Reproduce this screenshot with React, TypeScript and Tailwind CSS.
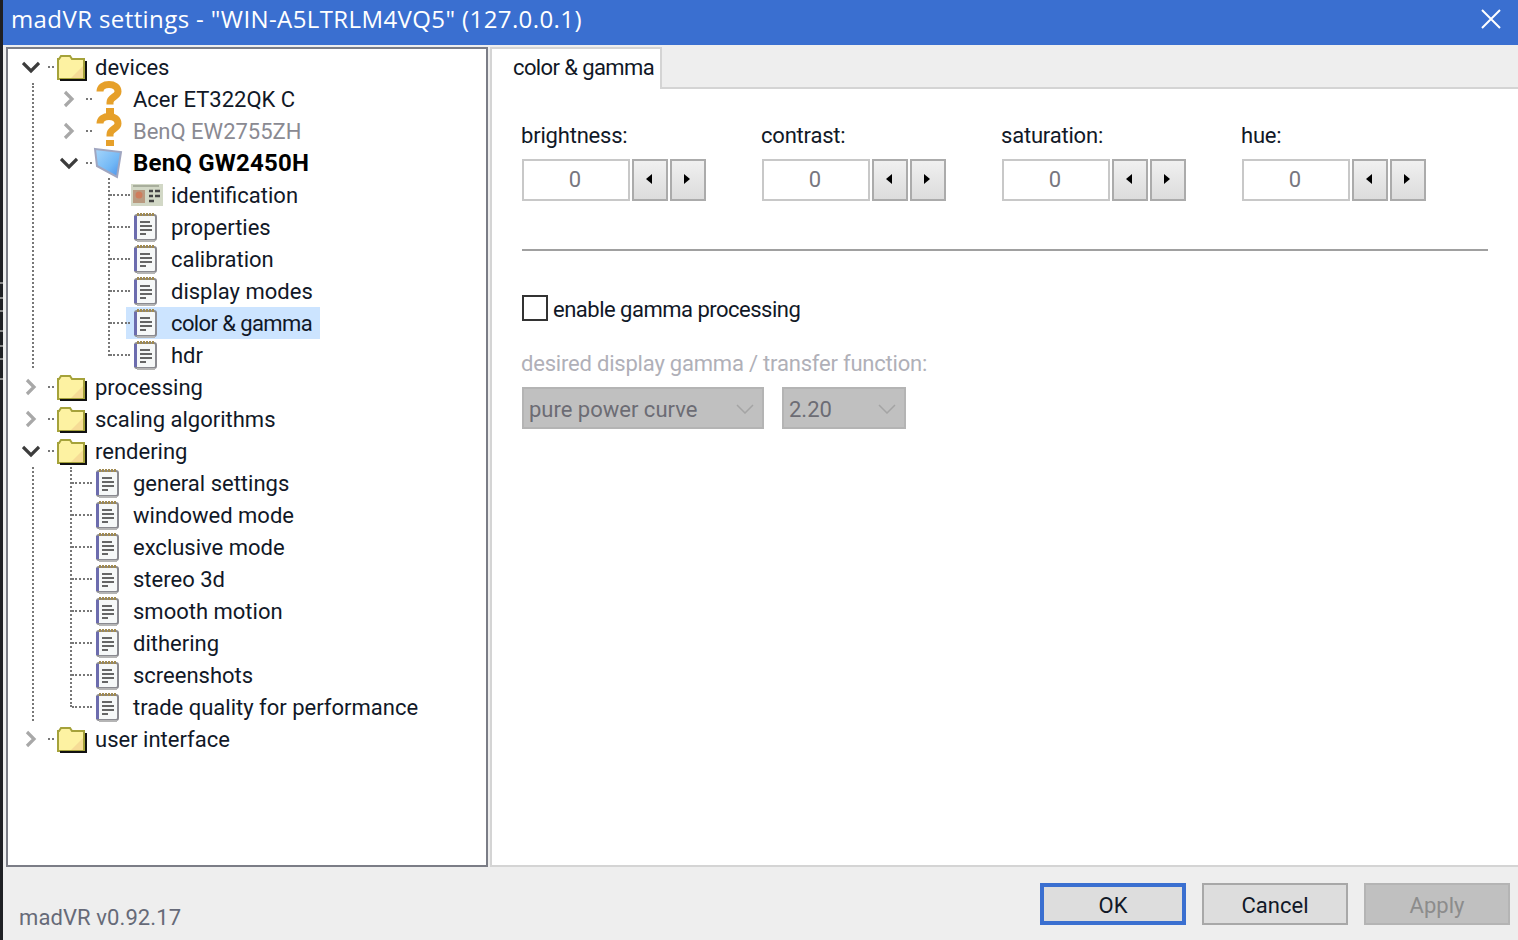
const font = "font-['Roboto',sans-serif]"

function Chevron({ open, dark }: { open?: boolean; dark?: boolean }) {
  return (
    <svg width="18" height="18" viewBox="0 0 18 18" fill="none" stroke={dark || open ? "#3c3c3c" : "#a8a8a8"} strokeWidth="3.2">
      {open ? <path d="M1 5l8 8 8-8" /> : <path d="M5 2l7 7-7 7" />}
    </svg>
  )
}

function Folder() {
  return (
    <svg width="30" height="28" viewBox="0 0 30 28" className="shrink-0 -ml-px">
      <path d="M1 6h1l2-3h9l2 3h12v20H1z" fill="#fdf2a2" stroke="#a5a23a" strokeWidth="2" />
      <path d="M14 25l12-12v12z" fill="#f6dc96" />
      <path d="M3 27h26V8" fill="none" stroke="#111" strokeWidth="2" />
    </svg>
  )
}

function Notepad() {
  return (
    <svg width="24" height="30" viewBox="0 0 24 30" className="shrink-0">
      <rect x="1" y="3" width="21" height="25" rx="2" fill="#f6f8f8" stroke="#8a8a90" strokeWidth="2" />
      <path d="M1.500 4v23" stroke="#6c6cae" strokeWidth="3" />
      <path d="M3 2.500h17" stroke="#a08a50" strokeWidth="3" strokeDasharray="2 1" />
      <path d="M6 10h10M6 14h12M6 18h12M6 22h6" stroke="#666" strokeWidth="2" />
      <path d="M3 29h18" stroke="#b5b5b5" strokeWidth="2" />
    </svg>
  )
}

function Question() {
  return (
    <svg width="26" height="36" viewBox="0 0 26 36" className="shrink-0 -my-1">
      <path d="M4 10.500c0-4.500 4-7 9-7s9 2.500 9 7c0 5.500-8 5-8 11v2" fill="none" stroke="#e6a02a" strokeWidth="7" />
      <path d="M10 27h8v6h-8z" fill="#e6a02a" />
    </svg>
  )
}

function Monitor() {
  return (
    <svg width="30" height="32" viewBox="0 0 30 32" className="shrink-0 -ml-[3px]">
      <defs>
        <linearGradient id="screen" x1="0" y1="0" x2="1" y2="1">
          <stop offset="0" stopColor="#a8d6fa" />
          <stop offset="0.6" stopColor="#72b8f6" />
          <stop offset="1" stopColor="#4a8fe8" />
        </linearGradient>
      </defs>
      <path d="M2 2l26 3-4 25L4 19z" fill="url(#screen)" stroke="#a0a6c0" strokeWidth="2" />
    </svg>
  )
}

function IdCard() {
  return (
    <svg width="32" height="22" viewBox="0 0 32 22" className="shrink-0 -ml-[3px]">
      <rect width="32" height="22" fill="#d2d8c6" />
      <rect x="2" y="6" width="12" height="13" fill="#b99a80" />
      <circle cx="8" cy="11" r="3.500" fill="#cf7d5c" />
      <path d="M18 7h4M24 7h5M18 12h4M24 12h5M18 17h5" stroke="#444" strokeWidth="2.500" />
      <path d="M2 2h26" stroke="#9aa08e" strokeWidth="1.500" />
    </svg>
  )
}

type RowProps = {
  level: number
  text: string
  icon: React.ReactNode
  expander?: "open" | "closed"
  grey?: boolean
  bold?: boolean
  selected?: boolean
}

function Row({ level, text, icon, expander, grey, bold, selected }: RowProps) {
  const starts = ["pl-[14px]", "pl-[52px]", "pl-[90px]"]
  return (
    <div className={`h-8 flex items-center ${starts[level]}`}>
      <div className="w-[18px] h-[18px] shrink-0">
        {expander && <Chevron open={expander === "open"} />}
      </div>
      <div className={`relative z-10 shrink-0 border-t-2 border-dotted border-[#777] ${expander ? "w-[6px] ml-[8px]" : "w-[20px] -ml-[6px]"}`} />
      <div className={`flex items-center shrink-0 h-8 ${selected ? "bg-[#cce4ff]" : ""} ${level === 2 ? "w-[194px] -ml-[4px] pl-[7px]" : "ml-[3px]"}`}>
        <div className="w-[38px] h-8 flex items-center shrink-0 pl-px">{icon}</div>
        <span className={`${font} whitespace-nowrap ${bold ? "text-[24px] tracking-[0.2px] font-bold text-black" : grey ? "text-[22px] text-[#8a8a92]" : selected ? "text-[22px] tracking-[-0.6px] text-[#111827]" : "text-[22px] text-[#111827]"}`}>
          {text}
        </span>
      </div>
    </div>
  )
}

function SpinField({ label }: { label: string }) {
  return (
    <div className="w-[240px]">
      <div className={`${font} text-[22px] tracking-[-0.2px] text-[#111827] h-[25px] leading-[25px] -ml-px`}>{label}</div>
      <div className="flex mt-[11px]">
        <div className={`${font} w-[108px] h-[42px] border-2 border-[#c8c8c8] bg-white flex items-center justify-center pb-[2px] pr-[2px] text-[22px] text-[#77777f]`}>0</div>
        <div className="flex gap-[2px] ml-[2px]">
          <SpinButton dir="left" />
          <SpinButton dir="right" />
        </div>
      </div>
    </div>
  )
}

function SpinButton({ dir }: { dir: "left" | "right" }) {
  return (
    <div className="w-[36px] h-[42px] border-2 border-[#ababab] bg-gradient-to-b from-[#f0f0f0] to-[#dcdcdc] flex items-center justify-center pb-[2px] pr-[2px]">
      <svg width="8" height="10" viewBox="0 0 8 10" fill="#000">
        {dir === "left" ? <path d="M7 0v10L1 5z" /> : <path d="M1 0v10l6-5z" />}
      </svg>
    </div>
  )
}

function DisabledSelect({ text, width }: { text: string; width: string }) {
  return (
    <div className={`${width} h-[42px] bg-[#c0c0c0] border-2 border-[#b4b4b4] flex items-center justify-between pl-[5px] pr-[8px] pt-[2px]`}>
      <span className={`${font} text-[22px] text-[#6c6c74]`}>{text}</span>
      <svg width="18" height="10" viewBox="0 0 18 10" fill="none" stroke="#a4a4a4" strokeWidth="1.500">
        <path d="M1 1l8 8 8-8" />
      </svg>
    </div>
  )
}

function Button({ text, kind }: { text: string; kind: "ok" | "normal" | "off" }) {
  const looks = {
    ok: "border-[4px] border-[#3a6fd0] bg-[#dddddd] text-[#111827]",
    normal: "border-2 border-[#a8a8a8] bg-[#dddddd] text-[#111827]",
    off: "border-2 border-[#b4b4b4] bg-[#c0c0c0] text-[#8c8c8c]",
  }
  return (
    <div className={`${font} ${looks[kind]} w-[146px] h-[42px] flex items-center justify-center pt-[3px] text-[22px]`}>{text}</div>
  )
}

function App() {
  return (
    <div className="w-[1518px] h-[940px] overflow-hidden flex bg-[#eeeeee]">
      <div className="w-[3px] h-full shrink-0 bg-[#1f2024] pt-[282px]">
        <div className="h-[2px] bg-[#8a8a8a]" />
        <div className="h-[2px] bg-[#8a8a8a] mt-[13px]" />
        <div className="h-[2px] bg-[#8a8a8a] mt-[11px]" />
        <div className="h-[2px] bg-[#8a8a8a] mt-[18px]" />
        <div className="h-[2px] bg-[#8a8a8a] mt-[13px]" />
        <div className="h-[2px] bg-[#8a8a8a] mt-[11px]" />
        <div className="h-[2px] bg-[#8a8a8a] mt-[18px]" />
      </div>
      <div className="flex-1 flex flex-col min-w-0">
        <div className="h-[45px] shrink-0 bg-[#3a6fd0] flex items-center justify-between pl-2 pr-[17px] pb-[8px]">
          <span className="font-['Open_Sans',sans-serif] text-[24px] text-white whitespace-nowrap tracking-[0.4px]">
            madVR settings - "WIN-A5LTRLM4VQ5" (127.0.0.1)
          </span>
          <svg width="20" height="20" viewBox="0 0 20 20" stroke="#fff" strokeWidth="2">
            <path d="M1 1l18 18M19 1L1 19" />
          </svg>
        </div>

        <div className="flex h-[822px] mt-[2px] shrink-0 pl-[3px]">
          <div className="w-[482px] h-[820px] border-2 border-[#7b7d86] bg-white pt-[2px] shrink-0">
            <div className="relative">
              <div className="absolute left-[24px] top-[32px] h-[285px] border-l-2 border-dotted border-[#777]" />
              <Row level={0} text="devices" icon={<Folder />} expander="open" />
              <Row level={1} text="Acer ET322QK C" icon={<Question />} expander="closed" />
              <Row level={1} text="BenQ EW2755ZH" icon={<Question />} expander="closed" grey />
              <div className="relative">
                <div className="absolute left-[100px] top-[31px] h-[178px] border-l-2 border-dotted border-[#777]" />
                <Row level={1} text="BenQ GW2450H" icon={<Monitor />} expander="open" bold />
                <Row level={2} text="identification" icon={<IdCard />} />
                <Row level={2} text="properties" icon={<Notepad />} />
                <Row level={2} text="calibration" icon={<Notepad />} />
                <Row level={2} text="display modes" icon={<Notepad />} />
                <Row level={2} text="color & gamma" icon={<Notepad />} selected />
                <Row level={2} text="hdr" icon={<Notepad />} />
              </div>
            </div>
            <Row level={0} text="processing" icon={<Folder />} expander="closed" />
            <Row level={0} text="scaling algorithms" icon={<Folder />} expander="closed" />
            <div className="relative">
              <div className="absolute left-[24px] top-[32px] h-[254px] border-l-2 border-dotted border-[#777]" />
              <div className="absolute left-[62px] top-[32px] h-[240px] border-l-2 border-dotted border-[#777]" />
              <Row level={0} text="rendering" icon={<Folder />} expander="open" />
              <Row level={1} text="general settings" icon={<Notepad />} />
              <Row level={1} text="windowed mode" icon={<Notepad />} />
              <Row level={1} text="exclusive mode" icon={<Notepad />} />
              <Row level={1} text="stereo 3d" icon={<Notepad />} />
              <Row level={1} text="smooth motion" icon={<Notepad />} />
              <Row level={1} text="dithering" icon={<Notepad />} />
              <Row level={1} text="screenshots" icon={<Notepad />} />
              <Row level={1} text="trade quality for performance" icon={<Notepad />} />
            </div>
            <Row level={0} text="user interface" icon={<Folder />} expander="closed" />
          </div>

          <div className="flex-1 ml-[2px] flex flex-col h-[820px] min-w-0">
            <div className="flex h-[42px] shrink-0">
              <div className={`${font} w-[172px] h-[42px] bg-white border-2 border-b-0 border-[#d4d4d4] flex items-center pl-[21px] pb-[3px] text-[22px] tracking-[-0.6px] whitespace-nowrap text-[#111827] shrink-0`}>
                color &amp; gamma
              </div>
              <div className="flex-1 border-b-2 border-[#d4d4d4]" />
            </div>
            <div className="flex-1 bg-white border-l-2 border-b-2 border-[#d4d4d4] pl-[30px] pr-[30px] pt-[34px]">
              <div className="flex">
                <SpinField label="brightness:" />
                <SpinField label="contrast:" />
                <SpinField label="saturation:" />
                <SpinField label="hue:" />
              </div>
              <div className="h-[2px] bg-[#a0a0a0] mt-[48px]" />
              <div className="flex items-center mt-[44px] h-[26px]">
                <div className="w-[26px] h-[26px] border-2 border-[#333333] bg-white" />
                <span className={`${font} text-[22px] tracking-[-0.5px] pt-[3px] text-[#111827] ml-[5px]`}>enable gamma processing</span>
              </div>
              <div className={`${font} text-[22px] tracking-[-0.2px] text-[#b0b0b8] mt-[30px] h-[25px] leading-[25px] -ml-px`}>
                desired display gamma / transfer function:
              </div>
              <div className="flex gap-[18px] mt-[11px]">
                <DisabledSelect text="pure power curve" width="w-[242px]" />
                <DisabledSelect text="2.20" width="w-[124px]" />
              </div>
            </div>
          </div>
        </div>

        <div className="flex-1 flex pl-4 pr-2 min-h-0">
          <div className={`${font} text-[22px] text-[#666a78] tracking-[0.1px] pt-[32px]`}>madVR v0.92.17</div>
          <div className="ml-auto flex gap-4 pt-[14px]">
            <Button text="OK" kind="ok" />
            <Button text="Cancel" kind="normal" />
            <Button text="Apply" kind="off" />
          </div>
        </div>
      </div>
    </div>
  )
}

export default App
